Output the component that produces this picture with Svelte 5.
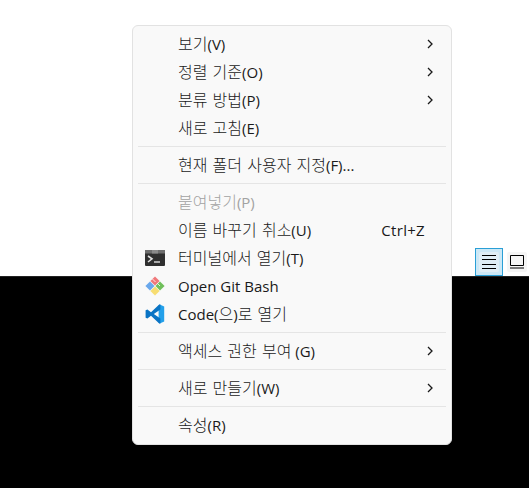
<script lang="ts">
type Item = { label?: string; sep?: boolean; arrow?: boolean; disabled?: boolean; shortcut?: string; icon?: string };

const items: Item[] = [
  { label: '보기(V)', arrow: true },
  { label: '정렬 기준(O)', arrow: true },
  { label: '분류 방법(P)', arrow: true },
  { label: '새로 고침(E)' },
  { sep: true },
  { label: '현재 폴더 사용자 지정(F)...' },
  { sep: true },
  { label: '붙여넣기(P)', disabled: true },
  { label: '이름 바꾸기 취소(U)', shortcut: 'Ctrl+Z' },
  { label: '터미널에서 열기(T)', icon: 'terminal' },
  { label: 'Open Git Bash', icon: 'git' },
  { label: 'Code(으)로 열기', icon: 'code' },
  { sep: true },
  { label: '액세스 권한 부여 (G)', arrow: true },
  { sep: true },
  { label: '새로 만들기(W)', arrow: true },
  { sep: true },
  { label: '속성(R)' },
];

// hangul runs are set a size up from the latin ones
function runs(text: string) {
  return text.split(/([가-힣]+(?: [가-힣]+)*)/).filter(Boolean).map((t) => ({ t, ko: /[가-힣]/.test(t) }));
}
</script>

<div class="page">
  <div class="top">
    <div class="viewbtns">
      <button class="view active" type="button" aria-label="자세히">
        <span class="inner">
          <svg width="14" height="14" viewBox="0 0 14 14"><path d="M0 .5h14M0 4.5h14M0 9.5h14M0 13.5h14" stroke="#000" fill="none"/></svg>
        </span>
      </button>
      <button class="view plain" type="button" aria-label="큰 아이콘">
        <svg width="14" height="14" viewBox="0 0 14 14"><path d="M.5.5h13v10H.5zM0 13h14" stroke="#000" fill="none"/></svg>
      </button>
    </div>
  </div>
  <div class="bottom"></div>

  <div class="menu">
    {#each items as item}
      {#if item.sep}
        <div class="sep"></div>
      {:else}
        <div class="row" class:disabled={item.disabled}>
          <span class="icon">
            {#if item.icon === 'terminal'}
              <svg width="20" height="16" viewBox="0 0 20 16">
                <rect width="20" height="16" rx="1" fill="#2f2f2f"/>
                <rect width="20" height="3.5" fill="#6e6e6e"/>
                <rect x="7" width="6" height="3.5" fill="#8a8a8a"/>
                <path d="M3 6l4 2.8L3 12" stroke="#e0e0e0" stroke-width="1.6" fill="none"/>
                <path d="M9 12h6" stroke="#e0e0e0" stroke-width="1.4"/>
              </svg>
            {:else if item.icon === 'git'}
              <svg width="20" height="20" viewBox="0 0 20 20">
                <path d="M10 .5l4.6 4.6-4.6 4.4-4.6-4.4z" fill="#f0787a"/>
                <path d="M15 5.4l4.6 4.6-4.6 4.6L10.5 10z" fill="#6fbf5a"/>
                <path d="M10 10.5l4.6 4.4-4.6 4.6-4.6-4.6z" fill="#f7dd72"/>
                <path d="M5 5.4L9.5 10 5 14.6.4 10z" fill="#6aa8ec"/>
                <path d="M7.5 3l3 3M12.5 7.5l2.5 2.5" stroke="#fff" stroke-width="1" fill="none" opacity=".8"/>
              </svg>
            {:else if item.icon === 'code'}
              <svg width="20" height="20" viewBox="0 0 100 100">
                <path d="M74 2 96 13V87L74 98 68 94V6z" fill="#23a0ea"/>
                <path d="M71 3 30 41 12 27 3 31V69L12 73 30 59 71 97 77 98V72L44 50 77 28V2z" fill="#0a74c4"/>
              </svg>
            {/if}
          </span>
          <span class="label">{#each runs(item.label ?? '') as r}<span class:ko={r.ko}>{r.t}</span>{/each}</span>
          {#if item.shortcut}
            <span class="shortcut">{item.shortcut}</span>
          {/if}
          {#if item.arrow}
            <svg class="arrow" width="7" height="10" viewBox="0 0 7 10"><path d="M1 1l4 4-4 4" stroke="#1a1a1a" stroke-width="1.3" fill="none"/></svg>
          {/if}
        </div>
      {/if}
    {/each}
  </div>
</div>

<style>
:global(body) { margin: 0; background: #000; }
.page { position: relative; width: 529px; height: 488px; overflow: hidden; font-family: "Open Sans", "Noto Sans CJK KR", sans-serif; }
.top { height: 276px; background: #fff; border-bottom: 1px solid #222; display: flex; justify-content: flex-end; align-items: flex-end; padding-right: 2px; }
.bottom { height: 211px; background: #000; }
.viewbtns { display: flex; gap: 4px; align-items: flex-start; }
.view { box-sizing: border-box; padding: 0; border: 0; display: flex; align-items: center; justify-content: center; }
.view.active { width: 28px; height: 28px; border: 1px solid #2a9fd6; background: #cce8f6; }
.view .inner { width: 20px; height: 20px; display: flex; align-items: center; justify-content: center; background: #e0eef6; border-radius: 2px; }
.view.plain { width: 20px; height: 20px; margin-top: 4px; background: #f5f5f5; border-radius: 2px; }
.menu { position: absolute; left: 132px; top: 25px; width: 320px; height: 420px; box-sizing: border-box; padding: 4px 5px; background: #f9f9f9; border: 1px solid #e2e2e2; border-radius: 6px; display: flex; flex-direction: column; }
.row { height: 28px; flex: none; display: flex; align-items: center; color: #1a1a1a; font-size: 15px; position: relative; }
.row.disabled { color: #a2a2a2; }
.icon { width: 34px; margin-right: 6px; flex: none; display: flex; justify-content: center; align-items: center; }
.label { flex: 1; white-space: nowrap; line-height: 22px; }
.ko { font-size: 16px; font-weight: 300; word-spacing: 1px; }
.shortcut { margin-right: 21px; letter-spacing: .3px; }
.arrow { position: absolute; right: 12px; top: 9px; }
.sep { height: 1px; flex: none; margin: 4px 0; background: #e5e5e5; }
</style>
